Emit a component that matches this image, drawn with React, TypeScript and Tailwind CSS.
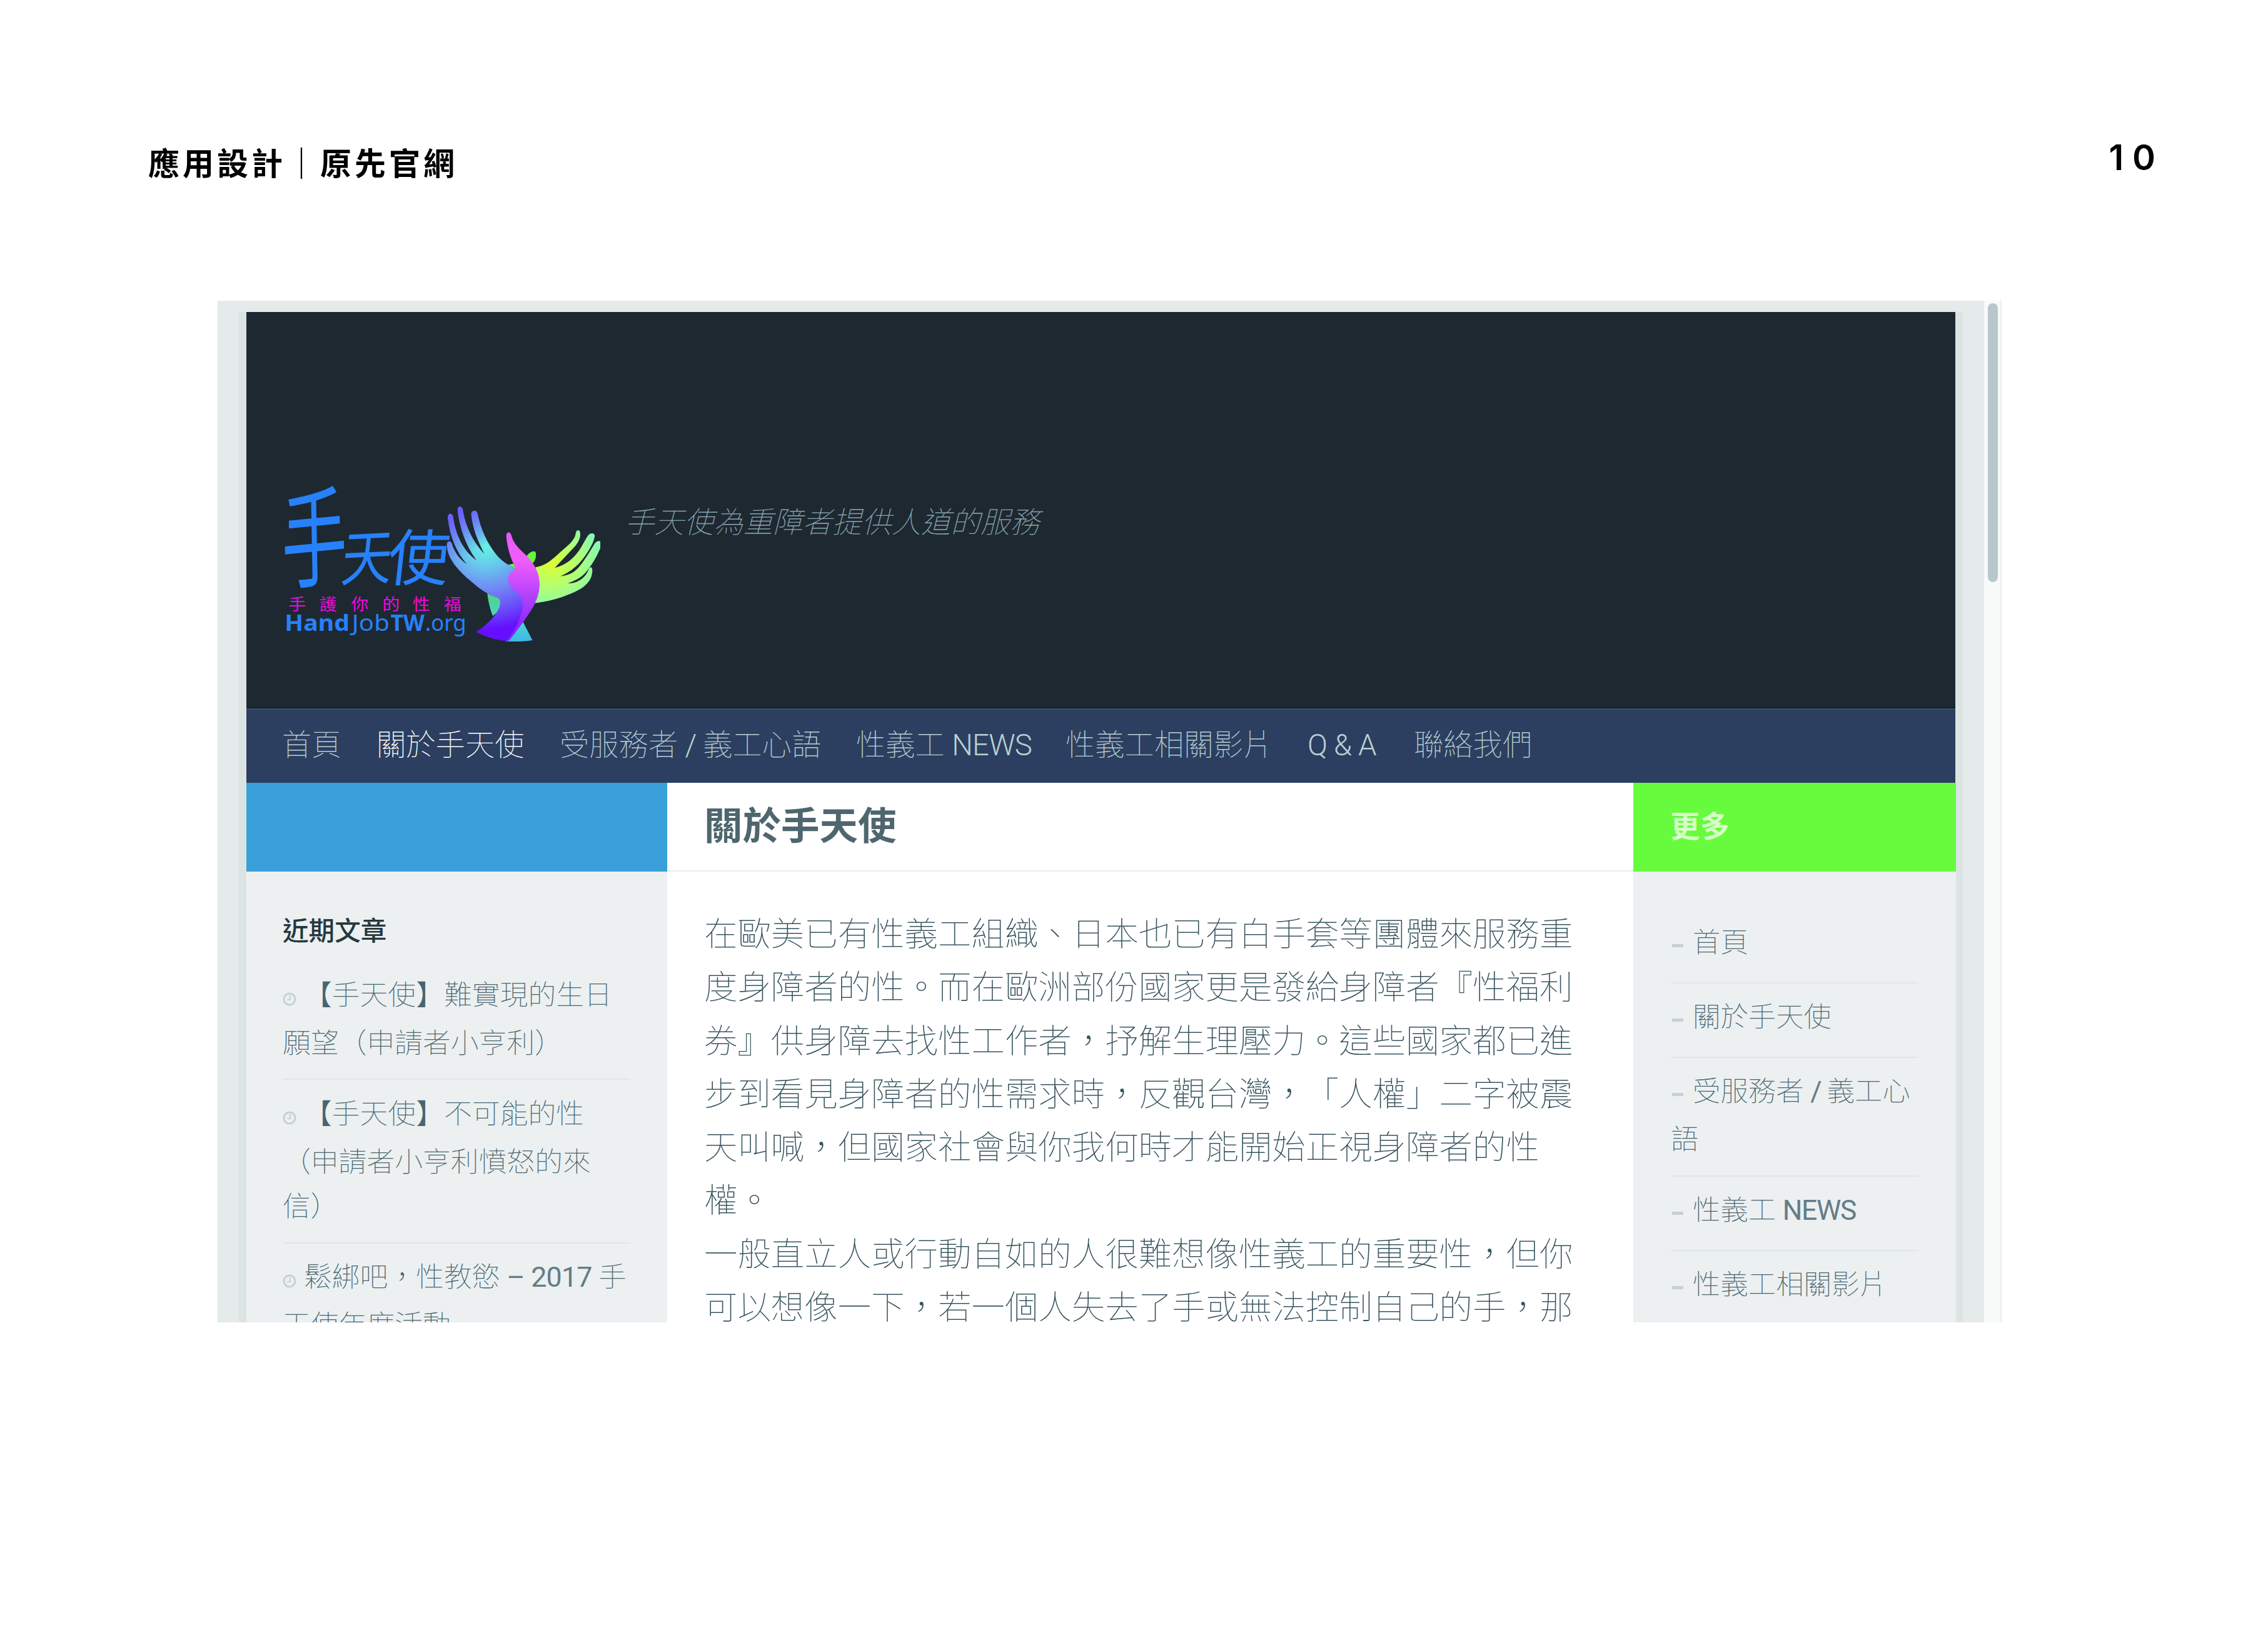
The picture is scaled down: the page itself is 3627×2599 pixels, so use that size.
import React from "react";

const nav = [
  { label: "首頁", box: "w-[151px]" },
  { label: "關於手天使", box: "w-[293px]", active: true },
  { label: "受服務者 / 義工心語", box: "w-[474px]" },
  { label: "性義工 NEWS", box: "w-[335px]" },
  { label: "性義工相關影片", box: "w-[387px]" },
  { label: "Q & A", box: "w-[170px]" },
  { label: "聯絡我們", box: "w-[200px]" },
];

const article = [
  "在歐美已有性義工組織、日本也已有白手套等團體來服務重",
  "度身障者的性。而在歐洲部份國家更是發給身障者『性福利",
  "券』供身障去找性工作者，抒解生理壓力。這些國家都已進",
  "步到看見身障者的性需求時，反觀台灣，「人權」二字被震",
  "天叫喊，但國家社會與你我何時才能開始正視身障者的性",
  "權。",
  "一般直立人或行動自如的人很難想像性義工的重要性，但你",
  "可以想像一下，若一個人失去了手或無法控制自己的手，那",
];

/* Latin runs are set heavier than the thin Chinese characters around them. */
function Mixed({ text, latin }: { text: string; latin: string }) {
  return (
    <span>
      {text.split(/([A-Z0-9&/–][A-Z0-9&/– ]*)/).map((part, i) =>
        i % 2 ? (
          <span key={i} className={latin}>
            {part}
          </span>
        ) : (
          part
        ),
      )}
    </span>
  );
}

function Clock() {
  return (
    <svg viewBox="0 0 22 22" className="mr-[12px] mt-[34px] h-[22px] w-[22px] shrink-0" fill="none" stroke="#c5d1d2" strokeWidth="3">
      <circle cx="11" cy="11" r="9" />
      <path d="M12 5v7H7.500" strokeWidth="2" />
    </svg>
  );
}

function Logo() {
  return (
    <svg viewBox="84 96 1428 768" preserveAspectRatio="none" className="h-[256px] w-[510px] shrink-0 overflow-visible font-['Noto_Sans_CJK_TC',sans-serif]">
      <defs>
        <radialGradient id="leftHand" gradientUnits="userSpaceOnUse" cx="1000" cy="400" r="400">
          <stop offset="0" stopColor="#66f4e4" />
          <stop offset="0.25" stopColor="#68c8ec" />
          <stop offset="0.52" stopColor="#7088f6" />
          <stop offset="0.8" stopColor="#6a48fb" />
          <stop offset="1" stopColor="#6410ff" />
        </radialGradient>
        <linearGradient id="fingerTint" gradientUnits="userSpaceOnUse" x1="850" y1="210" x2="960" y2="420">
          <stop offset="0" stopColor="#6d55fa" />
          <stop offset="1" stopColor="#6d55fa" stopOpacity="0" />
        </linearGradient>
        <linearGradient id="body" gradientUnits="userSpaceOnUse" x1="1160" y1="340" x2="1150" y2="850">
          <stop offset="0" stopColor="#e25cf8" />
          <stop offset="0.25" stopColor="#f05efa" />
          <stop offset="0.6" stopColor="#b040fc" />
          <stop offset="1" stopColor="#7a1cfe" />
        </linearGradient>
        <radialGradient id="rightHand" gradientUnits="userSpaceOnUse" cx="1290" cy="480" r="230">
          <stop offset="0" stopColor="#dcff30" />
          <stop offset="0.5" stopColor="#b4ff70" />
          <stop offset="1" stopColor="#84f8b4" />
        </radialGradient>
        <linearGradient id="tail" gradientUnits="userSpaceOnUse" x1="0" y1="620" x2="0" y2="850">
          <stop offset="0" stopColor="#4fd080" />
          <stop offset="0.6" stopColor="#4cd8d0" />
          <stop offset="1" stopColor="#40b8e6" />
        </linearGradient>
      </defs>
      <g fill="#2781fb" fontWeight="400">
        <text transform="translate(88 570) rotate(-6) skewX(-5) scale(0.98 1.72)" fontSize="300">手</text>
        <text transform="translate(345 568) rotate(-3) skewX(-8) scale(0.95 1.2)" fontSize="240">天</text>
        <text transform="translate(550 564) skewX(-6) scale(1.15 1.22)" fontSize="240">使</text>
      </g>
      <g fill="#ee08e0" fontSize="78" fontWeight="400" textAnchor="middle">
        <text x="155" y="708">手</text>
        <text x="293" y="708">護</text>
        <text x="435" y="708">你</text>
        <text x="575" y="708">的</text>
        <text x="710" y="708">性</text>
        <text x="850" y="708">福</text>
      </g>
      <g fill="#2781fb" fontSize="108" className="font-['Noto_Sans',sans-serif]">
        <text x="99" y="808" fontWeight="700" textLength="290" lengthAdjust="spacingAndGlyphs">Hand</text>
        <text x="400" y="808" fontWeight="400" textLength="168" lengthAdjust="spacingAndGlyphs">Job</text>
        <text x="573" y="808" fontWeight="700" textLength="152" lengthAdjust="spacingAndGlyphs">TW</text>
        <text x="728" y="808" fontWeight="400" textLength="184" lengthAdjust="spacingAndGlyphs">.org</text>
      </g>
      <path fill="#62f93a" d="M1180 452C1192 432 1208 420 1222 428C1227 446 1222 474 1206 484ZM1100 490L1132 482L1140 512Z" />
      <path fill="url(#tail)" d="M1006 626C1020 636 1050 644 1075 655V700L1030 735C1020 705 1010 668 1006 626ZM1165 762L1208 852C1170 859 1130 859 1088 857Z" />
      <path fill="url(#rightHand)" d="M1222 502C1268 494 1300 462 1330 432C1360 402 1398 376 1402 338C1404 320 1420 319 1422 336C1425 362 1412 388 1392 409L1308 505C1365 488 1395 455 1418 420C1434 395 1446 365 1460 346C1472 334 1488 339 1487 352C1484 385 1450 445 1418 482C1398 504 1370 528 1333 545C1370 540 1392 528 1412 506C1440 474 1466 424 1487 388C1495 374 1508 374 1512 378V410C1498 446 1476 490 1444 530C1424 552 1400 565 1367 579C1408 580 1436 556 1452 530C1460 516 1460 502 1470 502C1480 506 1477 530 1471 550C1450 604 1390 625 1340 645C1300 660 1260 668 1218 674Z" />
      <path fill="url(#leftHand)" d="M825 390C828 373 843 374 847 388C858 428 880 462 914 487C868 430 838 355 829 262C830 240 850 240 853 260C862 338 895 420 957 468C905 392 880 300 873 226C874 206 892 206 896 226C906 298 940 380 993 438C960 370 940 310 934 248C936 226 958 224 962 244C978 325 1006 385 1040 432C1060 460 1084 484 1110 494L1180 540V740L1095 856C1050 852 1000 838 956 812C995 785 1030 752 1050 715C1072 672 1068 650 1040 643C1000 628 960 596 925 562C870 510 824 455 825 390Z" />
      <path fill="url(#fingerTint)" d="M825 390C828 373 843 374 847 388C858 428 880 462 914 487C868 430 838 355 829 262C830 240 850 240 853 260C862 338 895 420 957 468C905 392 880 300 873 226C874 206 892 206 896 226C906 298 940 380 993 438C960 370 940 310 934 248C936 226 958 224 962 244C978 325 1006 385 1040 432L950 560C870 510 824 455 825 390Z" />
      <path fill="url(#body)" d="M1091 350C1092 330 1108 330 1113 346C1122 388 1150 415 1180 445C1222 488 1242 540 1240 590C1236 660 1205 705 1175 752C1150 790 1125 825 1100 856H1090C1118 820 1145 775 1156 730C1172 680 1166 650 1135 620C1110 598 1094 572 1100 548C1106 526 1120 520 1135 510C1112 465 1094 405 1091 350Z" />
    </svg>
  );
}

export default function App() {
  return (
    <div className="flex h-[2599px] w-[3627px] flex-col overflow-hidden bg-white font-['Roboto','Noto_Sans_CJK_TC',sans-serif] [text-spacing-trim:space-all]">
      <header className="flex h-[481px] items-start justify-between pl-[237px] pr-[166px]">
        <h1 className="mt-[218px] whitespace-nowrap font-['Noto_Sans_CJK_TC',sans-serif] text-[50px] font-bold leading-[80px] tracking-[5px] text-black">
          應用設計｜原先官網
        </h1>
        <div className="mt-[212px] font-['Inter',sans-serif] text-[56px] font-semibold leading-[80px] tracking-[14px] text-black">10</div>
      </header>

      <div className="ml-[348px] flex h-[1634px] w-[2853px] overflow-hidden">
        <div className="flex w-[2825px] flex-col bg-[#e5ebea] pl-[34px] pt-[18px]">
          <div className="flex h-[1616px] w-[2757px] flex-col bg-[#dce4e3] px-[12px]">
            <div className="flex h-[634px] shrink-0 items-start border-b-2 border-[#1a1e24] bg-[#1e2831] pl-[56px]">
              <div className="mt-[273px] flex">
                <Logo />
              </div>
              <p className="ml-[39px] mt-[302px] whitespace-nowrap text-[47.4px] font-thin italic leading-[70px] text-[#86a3ac]">
                手天使為重障者提供人道的服務
              </p>
            </div>
            <nav className="flex h-[119px] shrink-0 items-center border-t-2 border-[#35506e] bg-[#2c3f60] pb-[4px] pl-[57px]">
              {nav.map((n) => (
                <a
                  key={n.label}
                  className={
                    n.box +
                    " shrink-0 whitespace-nowrap text-[47.3px] font-thin leading-[70px] " +
                    (n.active ? "text-white" : "text-[#b9cfd3]")
                  }
                >
                  <Mixed text={n.label} latin="font-light tracking-[-0.8px]" />
                </a>
              ))}
            </nav>

            <div className="flex min-h-0 flex-1">
              <aside className="w-[673px] shrink-0 bg-[#ecf0f1]">
                <div className="h-[142px] bg-[#39a0d9]" />
                <div className="w-[614px] pl-[58px] text-[44.8px] font-thin text-[#48656f]">
                  <h3 className="mt-[61px] text-[41.6px] font-medium leading-[70px] text-[#26383f]">近期文章</h3>
                  <div className="mt-[28px] h-[174px] whitespace-nowrap border-b-2 border-[#dfe6e6] leading-[77px]">
                    <div className="flex"><Clock />【手天使】難實現的生日</div>
                    <div>願望（申請者小亨利）</div>
                  </div>
                  <div className="h-[262px] whitespace-nowrap border-b-2 border-[#dfe6e6] pt-[16px] leading-[77px]">
                    <div className="flex"><Clock />【手天使】不可能的性</div>
                    <div>（申請者小亨利憤怒的來</div>
                    <div className="leading-[66px]">信）</div>
                  </div>
                  <div className="whitespace-nowrap pt-[15px] leading-[77px]">
                    <div className="flex">
                      <Clock />
                      <Mixed text="鬆綁吧，性教慾 – 2017 手" latin="font-normal tracking-[-0.8px] text-[#647d85]" />
                    </div>
                    <div>天使年度活動</div>
                  </div>
                </div>
              </aside>

              <main className="w-[1545px] shrink-0 bg-white">
                <div className="flex h-[142px] items-center border-b-2 border-[#e8eeed] pl-[59px]">
                  <h2 className="whitespace-nowrap text-[61.5px] font-bold leading-[90px] text-[#4f666e]">關於手天使</h2>
                </div>
                <div className="mt-[58px] whitespace-nowrap pl-[59px] text-[53.44px] font-thin leading-[85.3px] text-[#37545e]">
                  {article.map((l) => (
                    <p key={l}>{l}</p>
                  ))}
                </div>
              </main>

              <aside className="w-[516px] shrink-0 bg-[#ecf0f1]">
                <div className="flex h-[142px] items-center bg-[#66fc3d] pl-[59px]">
                  <h3 className="text-[47.5px] font-bold leading-[70px] text-[#d6ffc8]">更多</h3>
                </div>
                <ul className="ml-[60px] mt-[60px] w-[396px] whitespace-nowrap text-[44.4px] font-thin leading-[77px] text-[#48656f]">
                  {[["首頁"], ["關於手天使"], ["受服務者 / 義工心", "語"], ["性義工 NEWS"], ["性義工相關影片"]].map((rows) => (
                    <li key={rows[0]} className="border-b-2 border-[#dfe6e6] pb-[24px] pt-[16px]">
                      <div className="flex">
                        <i className="ml-[2px] mr-[15px] mt-[40px] h-[5px] w-[18px] shrink-0 bg-[#c5d1d2]" />
                        <Mixed text={rows[0]} latin="font-normal tracking-[-1.4px] text-[#647d85]" />
                      </div>
                      {rows[1] && <div className="-mb-[6px]">{rows[1]}</div>}
                    </li>
                  ))}
                </ul>
              </aside>
            </div>
          </div>
        </div>
        <div className="w-[28px] border-r-2 border-[#e8eeed] bg-[#f8fafa] pl-[6px] pt-[4px]">
          <div className="h-[446px] w-[16px] rounded-full bg-[#b8c8ca]" />
        </div>
      </div>
    </div>
  );
}
